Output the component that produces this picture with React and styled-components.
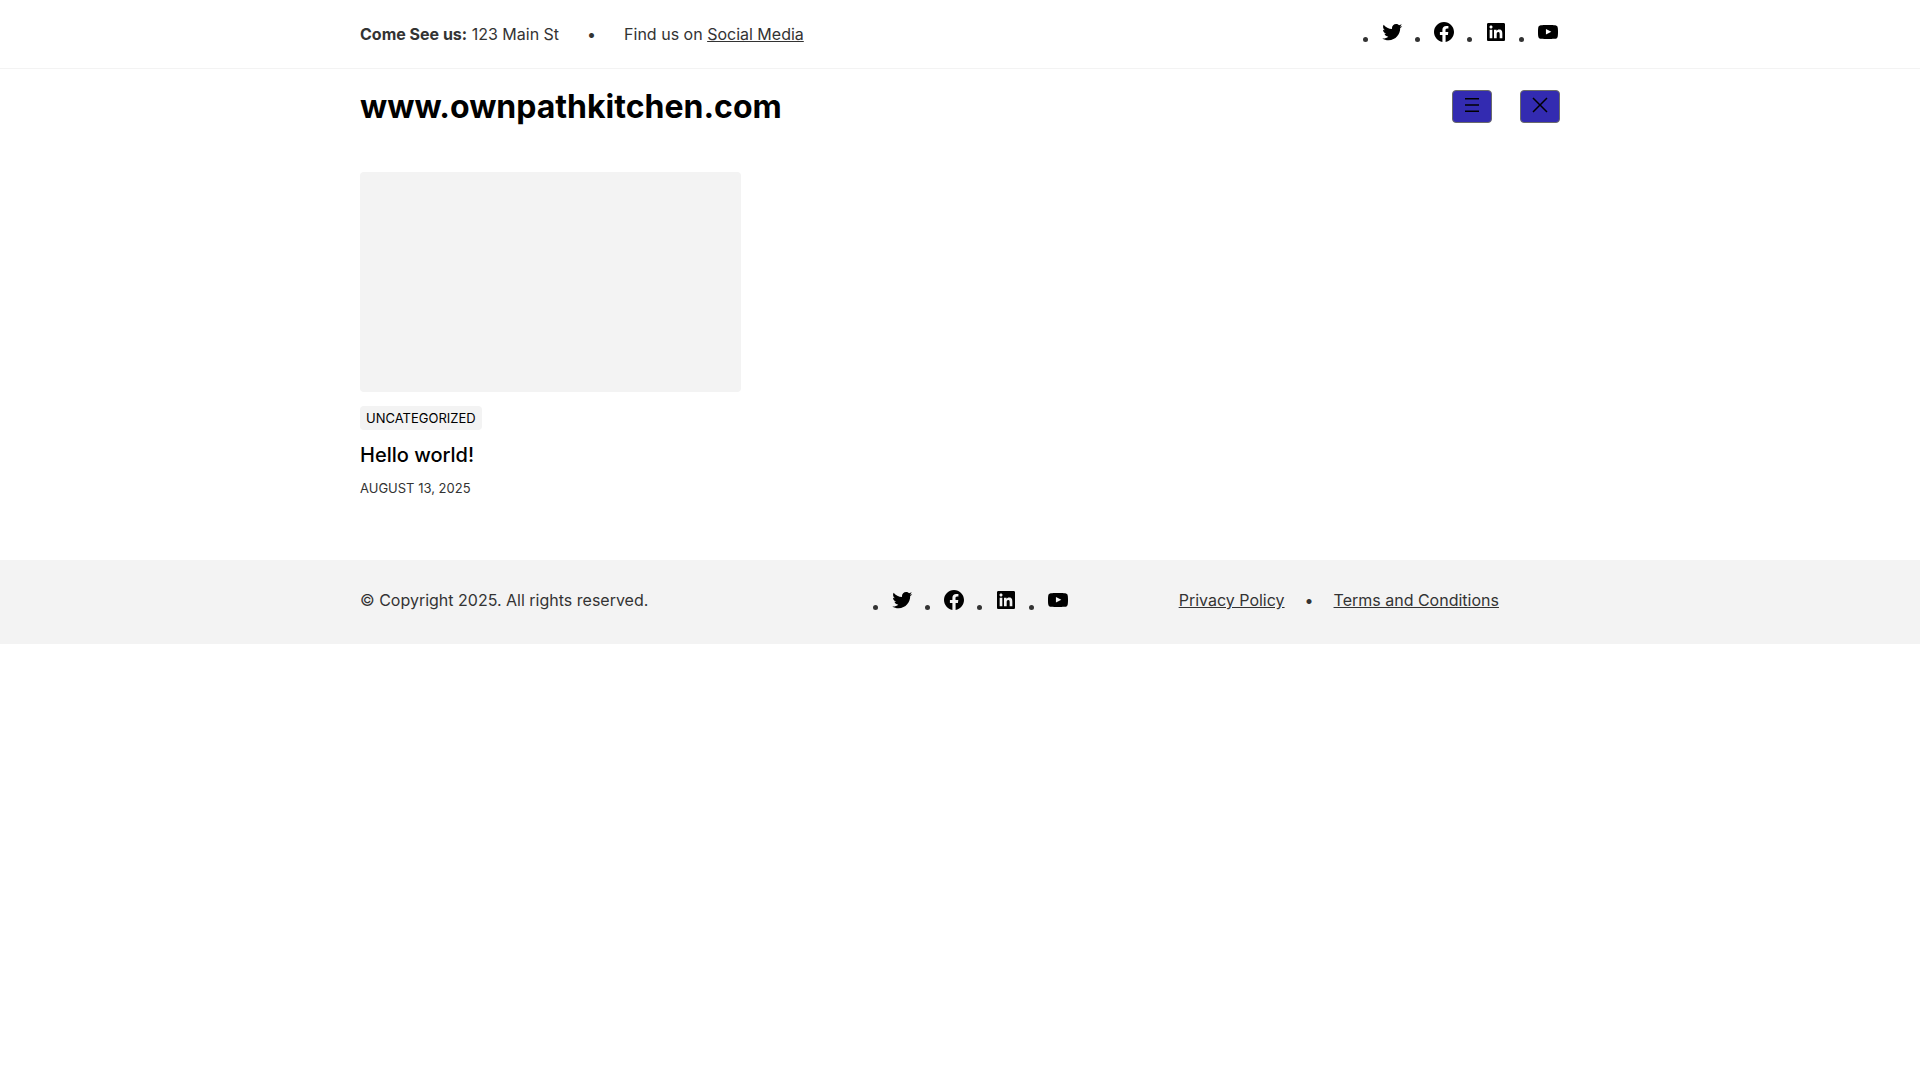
import React from "react"
import styled, { createGlobalStyle } from "styled-components"

const GlobalStyle = createGlobalStyle`
  * {
    box-sizing: border-box;
  }
  body {
    margin: 0;
    background: #fff;
    color: #333;
    font-family: Inter, "Liberation Sans", sans-serif;
    font-size: 16px;
    font-weight: 400;
    line-height: 24px;
  }
`

const Container = styled.div`
  width: 100%;
  max-width: 1200px;
  margin: 0 auto;
`

const TopBar = styled.div`
  padding: 20px 28px;
  border-bottom: 1px solid #f3f3f3;
`

const Row = styled(Container)`
  display: flex;
  align-items: center;
  justify-content: space-between;
`

const Inline = styled.div`
  display: flex;
  gap: ${({ $gap }) => $gap}px;
`

const Text = styled.p`
  margin: 0;
`

const Strong = styled.strong`
  font-weight: 700;
`

const TextLink = styled.a`
  color: inherit;
  text-decoration: underline;
`

const SocialList = styled.ul`
  display: flex;
  gap: 28px;
  margin: 0;
  padding: 0 0 0 40px;
  list-style: disc;
`

const SocialItem = styled.li`
  height: 28px;
  line-height: 28px;
`

const SocialIconLink = styled.a`
  display: block;
  color: #000;
  line-height: 0;
`

const Icon = styled.svg`
  width: 24px;
  height: 24px;
  fill: currentColor;
`

const Header = styled.header`
  padding: 20px 28px;
`

const SiteTitle = styled.h1`
  margin: 0;
  font-size: 32px;
  font-weight: 700;
  line-height: 35px;
`

const SiteLink = styled.a`
  color: #000;
  text-decoration: none;
`

const MenuButton = styled.button`
  display: flex;
  width: 40px;
  height: 33px;
  padding: 2px 7px;
  border: 1px solid #6b6b6b;
  border-radius: 4px;
  background: #332bb1;
  color: #000;
  cursor: pointer;
`

const Main = styled.main`
  padding: 28px 28px 63px;
`

const PostGrid = styled(Container)`
  display: grid;
  grid-template-columns: repeat(3, 1fr);
  gap: 28px;
`

const Post = styled.article`
  display: flex;
  flex-direction: column;
  align-items: flex-start;
  gap: 14px;
`

const PostImage = styled.div`
  width: 100%;
  height: 220px;
  border-radius: 4px;
  background: #f3f3f3;
`

const Category = styled.a`
  padding: 0 6px;
  border-radius: 4px;
  background: #f3f3f3;
  color: #000;
  font-size: 13px;
  text-decoration: none;
  text-transform: uppercase;
`

const PostTitle = styled.h2`
  margin: 0;
  font-size: 20px;
  font-weight: 500;
  line-height: 22px;
`

const PostDate = styled.time`
  font-size: 13px;
  line-height: 17px;
  text-transform: uppercase;
`

const FooterBar = styled.footer`
  padding: 28px;
  background: #f3f3f3;
`

const FooterGrid = styled(Container)`
  display: grid;
  grid-template-columns: repeat(3, 1fr);
  gap: 28px;
`

const FooterSocial = styled.div`
  display: flex;
  justify-content: center;
`

const socials = [
  {
    name: "Twitter",
    path: "M22.23,5.924c-0.736,0.326-1.527,0.547-2.357,0.646c0.847-0.508,1.498-1.312,1.804-2.27 c-0.793,0.47-1.671,0.812-2.606,0.996C18.324,4.498,17.257,4,16.077,4c-2.266,0-4.103,1.837-4.103,4.103 c0,0.322,0.036,0.635,0.106,0.935C8.67,8.867,5.647,7.234,3.623,4.751C3.27,5.357,3.067,6.062,3.067,6.814 c0,1.424,0.724,2.679,1.825,3.415c-0.673-0.021-1.305-0.206-1.859-0.513c0,0.017,0,0.034,0,0.052c0,1.988,1.414,3.647,3.292,4.023 c-0.344,0.094-0.707,0.144-1.081,0.144c-0.264,0-0.521-0.026-0.772-0.074c0.522,1.63,2.038,2.816,3.833,2.85 c-1.404,1.1-3.174,1.756-5.096,1.756c-0.331,0-0.658-0.019-0.979-0.057c1.816,1.164,3.973,1.843,6.29,1.843 c7.547,0,11.675-6.252,11.675-11.675c0-0.178-0.004-0.355-0.012-0.531C20.985,7.47,21.68,6.747,22.23,5.924z",
  },
  {
    name: "Facebook",
    path: "M12 2C6.5 2 2 6.5 2 12c0 5 3.7 9.1 8.4 9.9v-7H7.9V12h2.5V9.8c0-2.5 1.5-3.9 3.8-3.9 1.1 0 2.2.2 2.2.2v2.5h-1.3c-1.2 0-1.6.8-1.6 1.6V12h2.8l-.4 2.9h-2.3v7C18.3 21.1 22 17 22 12c0-5.5-4.5-10-10-10z",
  },
  {
    name: "LinkedIn",
    path: "M19.7,3H4.3C3.582,3,3,3.582,3,4.3v15.4C3,20.418,3.582,21,4.3,21h15.4c0.718,0,1.3-0.582,1.3-1.3V4.3 C21,3.582,20.418,3,19.7,3z M8.339,18.338H5.667v-8.59h2.672V18.338z M7.004,8.574c-0.857,0-1.549-0.694-1.549-1.548 c0-0.855,0.691-1.548,1.549-1.548c0.854,0,1.547,0.694,1.547,1.548C8.551,7.881,7.858,8.574,7.004,8.574z M18.339,18.338h-2.669 v-4.177c0-0.996-0.017-2.278-1.387-2.278c-1.389,0-1.601,1.086-1.601,2.206v4.249h-2.667v-8.59h2.559v1.174h0.037 c0.356-0.675,1.227-1.387,2.526-1.387c2.703,0,3.203,1.779,3.203,4.092V18.338z",
  },
  {
    name: "YouTube",
    path: "M21.8,8.001c0,0-0.195-1.378-0.795-1.985c-0.76-0.797-1.613-0.801-2.004-0.847c-2.799-0.202-6.997-0.202-6.997-0.202 h-0.009c0,0-4.198,0-6.997,0.202C4.608,5.216,3.756,5.22,2.995,6.016C2.395,6.623,2.2,8.001,2.2,8.001S2,9.62,2,11.238v1.517 c0,1.618,0.2,3.237,0.2,3.237s0.195,1.378,0.795,1.985c0.761,0.797,1.76,0.771,2.205,0.855c1.6,0.153,6.8,0.201,6.8,0.201 s4.203-0.006,7.001-0.209c0.391-0.047,1.243-0.051,2.004-0.847c0.6-0.607,0.795-1.985,0.795-1.985s0.2-1.618,0.2-3.237v-1.517 C22,9.62,21.8,8.001,21.8,8.001z M9.935,14.594l-0.001-5.62l5.404,2.82L9.935,14.594z",
  },
]

const SocialLinks = () => (
  <SocialList>
    {socials.map(({ name, path }) => (
      <SocialItem key={name}>
        <SocialIconLink href="#" aria-label={name}>
          <Icon viewBox="0 0 24 24" aria-hidden="true">
            <path d={path} />
          </Icon>
        </SocialIconLink>
      </SocialItem>
    ))}
  </SocialList>
)

const App = () => {
  return (
    <>
      <GlobalStyle />
      <TopBar>
        <Row>
          <Inline $gap={28}>
            <Text>
              <Strong>Come See us:</Strong> 123 Main St
            </Text>
            <Text>•</Text>
            <Text>
              Find us on <TextLink href="#">Social Media</TextLink>
            </Text>
          </Inline>
          <SocialLinks />
        </Row>
      </TopBar>
      <Header>
        <Row>
          <SiteTitle>
            <SiteLink href="/">www.ownpathkitchen.com</SiteLink>
          </SiteTitle>
          <Inline $gap={28}>
            <MenuButton type="button" aria-label="Open menu">
              <Icon viewBox="0 0 24 24" aria-hidden="true">
                <path d="M5 5v1.5h14V5H5zm0 7.8h14v-1.5H5v1.5zM5 19h14v-1.5H5V19z" />
              </Icon>
            </MenuButton>
            <MenuButton type="button" aria-label="Close menu">
              <Icon viewBox="0 0 24 24" aria-hidden="true">
                <path d="m13.06 12 6.47-6.47-1.06-1.06L12 10.94 5.53 4.47 4.47 5.53 10.94 12l-6.47 6.47 1.06 1.06L12 13.06l6.47 6.47 1.06-1.06L13.06 12Z" />
              </Icon>
            </MenuButton>
          </Inline>
        </Row>
      </Header>
      <Main>
        <PostGrid>
          <Post>
            <PostImage />
            <Category href="#">Uncategorized</Category>
            <PostTitle>
              <SiteLink href="#">Hello world!</SiteLink>
            </PostTitle>
            <PostDate dateTime="2025-08-13">August 13, 2025</PostDate>
          </Post>
        </PostGrid>
      </Main>
      <FooterBar>
        <FooterGrid>
          <Text>© Copyright 2025. All rights reserved.</Text>
          <FooterSocial>
            <SocialLinks />
          </FooterSocial>
          <Inline $gap={20}>
            <TextLink href="#">Privacy Policy</TextLink>
            <Text>•</Text>
            <TextLink href="#">Terms and Conditions</TextLink>
          </Inline>
        </FooterGrid>
      </FooterBar>
    </>
  )
}

export default App
